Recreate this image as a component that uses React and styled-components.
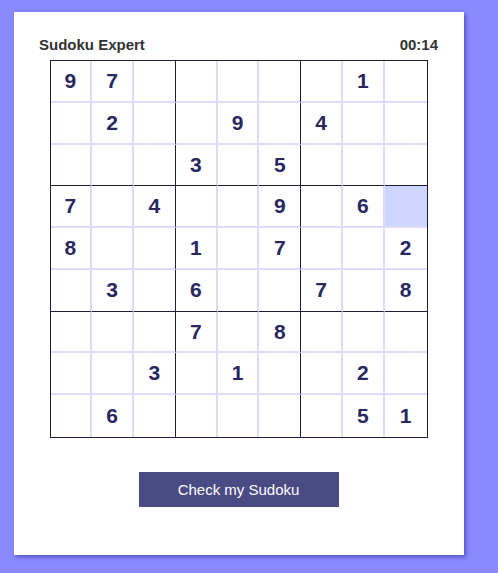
import React from 'react';
import styled, { createGlobalStyle } from 'styled-components';

const BG = '#8a8aff';
const INK = '#28285f';
const THIN = '#dcdcf8';
const THICK = '#1c1c3c';

const PUZZLE = [
  '97.....1.',
  '.2..9.4..',
  '...3.5...',
  '7.4..9.6.',
  '8..1.7..2',
  '.3.6..7.8',
  '...7.8...',
  '..3.1..2.',
  '.6.....51',
];

const SELECTED = { row: 3, col: 8 };

const GlobalStyle = createGlobalStyle`
  html, body {
    margin: 0;
    padding: 0;
    background: ${BG};
    min-height: 100vh;
  }
  body {
    font-family: "Liberation Sans", Arial, sans-serif;
  }
`;

const Card = styled.div`
  width: 450px;
  box-sizing: border-box;
  margin: 12px 0 0 14px;
  padding: 24px 26px 48px 25px;
  background: #fff;
  box-shadow: 2px 2px 4px rgba(40, 40, 140, 0.55);
  display: flex;
  flex-direction: column;
  align-items: center;
`;

const Header = styled.div`
  width: 100%;
  display: flex;
  justify-content: space-between;
  align-items: baseline;
  font-size: 15px;
  line-height: 18px;
  font-weight: bold;
  color: #333;
`;

const Board = styled.div`
  margin-top: 6px;
  width: 378px;
  height: 378px;
  box-sizing: border-box;
  border: 1px solid ${THICK};
  display: grid;
  grid-template-columns: repeat(9, 1fr);
  grid-template-rows: repeat(9, 1fr);
`;

const Cell = styled.div`
  box-sizing: border-box;
  display: flex;
  align-items: center;
  justify-content: center;
  font-size: 21px;
  font-weight: bold;
  color: ${INK};
  background: ${(p) => (p.$selected ? '#ccd6ff' : '#fff')};
  border-right: ${(p) =>
    p.$col === 8 ? 'none' : p.$col % 3 === 2 ? `1px solid ${THICK}` : `2px solid ${THIN}`};
  border-bottom: ${(p) =>
    p.$row === 8 ? 'none' : p.$row % 3 === 2 ? `1px solid ${THICK}` : `2px solid ${THIN}`};
`;

const CheckButton = styled.button`
  margin-top: 34px;
  width: 200px;
  height: 35px;
  border: none;
  background: #4a4a85;
  color: #fff;
  font-family: "Liberation Sans", Arial, sans-serif;
  font-size: 15px;
  cursor: pointer;
`;

export default function App() {
  return (
    <>
      <GlobalStyle />
      <Card>
        <Header>
          <span>Sudoku Expert</span>
          <span>00:14</span>
        </Header>
        <Board>
          {PUZZLE.map((line, r) =>
            line.split('').map((ch, c) => (
              <Cell
                key={`${r}-${c}`}
                $row={r}
                $col={c}
                $selected={r === SELECTED.row && c === SELECTED.col}
              >
                {ch === '.' ? '' : ch}
              </Cell>
            ))
          )}
        </Board>
        <CheckButton>Check my Sudoku</CheckButton>
      </Card>
    </>
  );
}
